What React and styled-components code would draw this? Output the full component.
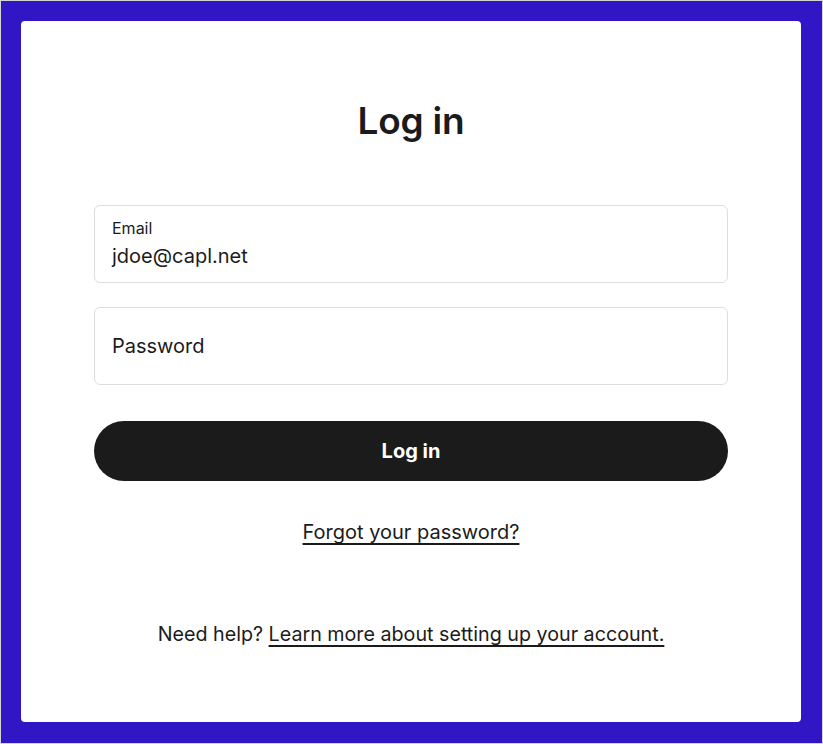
import styled, { createGlobalStyle } from "styled-components";

const GlobalStyle = createGlobalStyle`
  html, body {
    margin: 0;
    padding: 0;
  }
  body {
    font-family: Inter, "Noto Sans", sans-serif;
    color: #1b1b1b;
  }
`;

const App = () => {
  return (
    <>
      <GlobalStyle />
      <St.Page>
        <St.Card>
          <St.Title>Log in</St.Title>

          <St.Form onSubmit={(e) => e.preventDefault()}>
            <St.Field>
              <St.Label>Email</St.Label>
              <St.Value>jdoe@capl.net</St.Value>
            </St.Field>
            <St.Field>
              <St.Value>Password</St.Value>
            </St.Field>
            <St.Button type="submit">Log in</St.Button>
          </St.Form>

          <St.Forgot href="#">Forgot your password?</St.Forgot>

          <St.Help>
            Need help? <a href="#">Learn more about setting up your account.</a>
          </St.Help>
        </St.Card>
      </St.Page>
    </>
  );
};

export default App;

const St = {
  Page: styled.div`
    box-sizing: border-box;
    display: flex;
    width: 100%;
    height: 744px;
    padding: 20px 21px 21px 20px;

    background-color: #3016c4;
    border: 1px solid #d4d4d4;
  `,
  Card: styled.main`
    display: flex;
    flex-direction: column;
    align-items: center;

    flex: 1;
    padding-top: 76px;

    background-color: #ffffff;
    border-radius: 4px;
  `,
  Title: styled.h1`
    margin: 0;

    font-size: 37px;
    font-weight: 600;
    line-height: 48px;
    letter-spacing: -0.2px;
  `,
  Form: styled.form`
    display: flex;
    flex-direction: column;
    gap: 24px;

    width: 634px;
    margin-top: 60px;
  `,
  Field: styled.div`
    box-sizing: border-box;
    display: flex;
    flex-direction: column;
    justify-content: center;
    gap: 5px;

    height: 78px;
    padding: 0 17px;

    border: 1px solid #dedede;
    border-radius: 6px;
  `,
  Label: styled.span`
    font-size: 16px;
    line-height: 20px;
    margin-top: -1px;
  `,
  Value: styled.span`
    font-size: 20px;
    line-height: 26px;
  `,
  Button: styled.button`
    height: 60px;
    margin-top: 12px;

    font-family: inherit;
    font-size: 20px;
    font-weight: 700;
    color: #ffffff;
    background-color: #1b1b1b;
    border: none;
    border-radius: 30px;

    cursor: pointer;
  `,
  Forgot: styled.a`
    margin-top: 38px;

    font-size: 20px;
    line-height: 26px;
    color: #1b1b1b;
    text-decoration: underline;
    text-decoration-thickness: 2px;
    text-underline-offset: 4px;
  `,
  Help: styled.p`
    margin: 76px 0 0;

    font-size: 19.7px;
    line-height: 26px;

    a {
      color: #1b1b1b;
      text-decoration: underline;
      text-decoration-thickness: 2px;
      text-underline-offset: 4px;
    }
  `,
};
